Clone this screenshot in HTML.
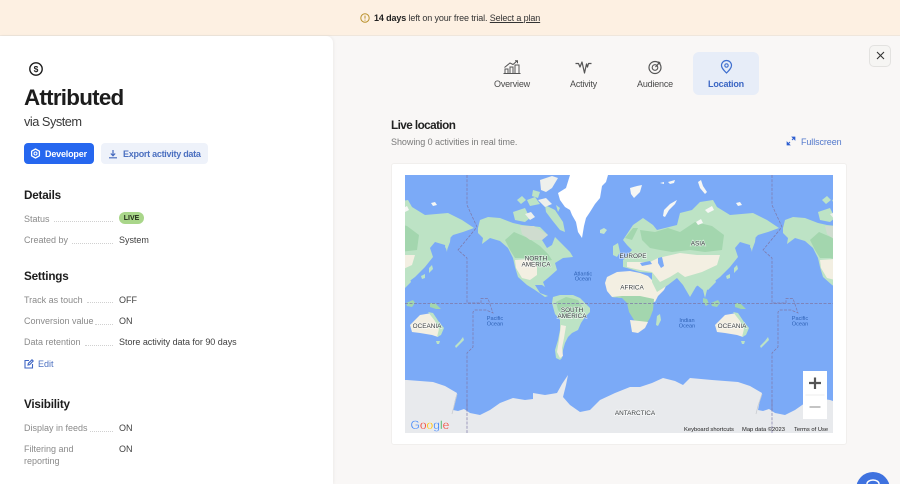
<!DOCTYPE html>
<html><head><meta charset="utf-8"><style>
html,body{margin:0;padding:0;width:900px;height:484px;overflow:hidden}
body{position:relative;background:#f9f7f6;font-family:"Liberation Sans",sans-serif;color:#3a3a3a}
.t{position:absolute;white-space:nowrap;line-height:12px;font-size:9px}
.h{font-weight:700;font-size:11.7px;color:#1c1c1c;letter-spacing:-.2px;left:24px}
.l{left:24px;color:#8a8a8a}
.v{left:119px;color:#404040;letter-spacing:-.03px}
.d{position:absolute;border-bottom:1px dotted #d0d0d0;height:0}
.tab{color:#4a4a4a;text-align:center;width:70px;letter-spacing:-.2px}
svg{position:absolute;overflow:visible}
.ml{font-size:6.4px;fill:#3c4043;text-anchor:middle;stroke:#fff;stroke-width:1.4px;paint-order:stroke;stroke-opacity:.6}
.mo{font-size:5.6px;fill:#2f62b5;text-anchor:middle}
</style></head><body>
<div style="position:absolute;left:0;top:0;width:900px;height:36px;background:#fdf0e2;border-bottom:1px solid #efe6dc;box-sizing:border-box"></div>
<svg style="left:360px;top:13px" width="10" height="10" viewBox="0 0 10 10"><circle cx="5" cy="5" r="4.2" fill="none" stroke="#b9912c" stroke-width="1"/><path d="M5 2.600v3M5 6.600v1" stroke="#b9912c" stroke-width="1"/></svg>
<div class="t" style="left:374px;top:11.500px;color:#333;letter-spacing:-.13px"><b style="color:#222">14 days</b> left on your free trial. <u>Select a plan</u></div>

<div style="position:absolute;left:0;top:36px;width:333px;height:448px;background:#fff;border-top-right-radius:7px;box-shadow:1px 0 3px rgba(0,0,0,.05)"></div>
<svg style="left:28px;top:61px" width="16" height="16" viewBox="0 0 16 16"><circle cx="8" cy="8" r="6.200" fill="none" stroke="#1c1c1c" stroke-width="1.400"/><text x="8" y="11" font-size="8.500" font-weight="700" text-anchor="middle" fill="#1c1c1c" font-family="Liberation Sans">$</text></svg>
<div class="t" style="left:24px;top:85px;font-size:22.400px;line-height:26px;font-weight:700;color:#1c1c1c;letter-spacing:-.75px">Attributed</div>
<div class="t" style="left:24px;top:114px;font-size:12.800px;line-height:16px;color:#3a3a3a;letter-spacing:-.5px">via System</div>

<div style="position:absolute;left:24px;top:143px;width:70px;height:21px;background:#2667ef;border-radius:4px"></div>
<svg style="left:30px;top:148px" width="11" height="11" viewBox="0 0 11 11"><path d="M5.500 1l3.900 2.200v4.600L5.500 10 1.600 7.800V3.200z" fill="none" stroke="#fff" stroke-width="1.300" stroke-linejoin="round"/><circle cx="5.500" cy="5.500" r="1.500" fill="none" stroke="#fff" stroke-width="1.100"/></svg>
<div class="t" style="left:45px;top:148px;color:#fff;font-weight:700;letter-spacing:-.18px">Developer</div>
<div style="position:absolute;left:101px;top:143px;width:107px;height:21px;background:#eef2fa;border-radius:4px"></div>
<svg style="left:108px;top:149px" width="10" height="10" viewBox="0 0 10 10"><path d="M5 1v5.500M2.800 4.500L5 6.800l2.200-2.300M1 8.800h8" fill="none" stroke="#4569bd" stroke-width="1.200"/></svg>
<div class="t" style="left:123px;top:148px;color:#4c70c0;font-weight:700;letter-spacing:-.27px">Export activity data</div>

<div class="t h" style="top:189.500px">Details</div>
<div class="t l" style="top:212.500px">Status</div><div class="d" style="left:54px;width:59px;top:221px"></div>
<div style="position:absolute;left:119px;top:212px;width:25px;height:12px;border-radius:6px;background:#a9d68a"></div>
<div class="t" style="left:119px;width:25px;text-align:center;top:212.500px;font-size:7px;font-weight:700;color:#1f2a17">LIVE</div>
<div class="t l" style="top:234px">Created by</div><div class="d" style="left:72px;width:41px;top:243px"></div>
<div class="t v" style="top:234px">System</div>

<div class="t h" style="top:270.500px">Settings</div>
<div class="t l" style="top:293.500px">Track as touch</div><div class="d" style="left:87px;width:26px;top:302px"></div>
<div class="t v" style="top:293.500px">OFF</div>
<div class="t l" style="top:315px">Conversion value</div><div class="d" style="left:95px;width:18px;top:324px"></div>
<div class="t v" style="top:315px">ON</div>
<div class="t l" style="top:336px">Data retention</div><div class="d" style="left:85px;width:28px;top:345px"></div>
<div class="t v" style="top:336px">Store activity data for 90 days</div>
<svg style="left:24px;top:358.500px" width="10" height="10" viewBox="0 0 10 10"><path d="M5 1.500H1v7.500h7.500V5M4 6l.4-1.700L8 .8l1.200 1.200L5.700 5.600z" fill="none" stroke="#3f66c4" stroke-width="1.100"/></svg>
<div class="t" style="left:38px;top:357.500px;color:#4c70c0">Edit</div>

<div class="t h" style="top:398.500px">Visibility</div>
<div class="t l" style="top:421.500px">Display in feeds</div><div class="d" style="left:90px;width:23px;top:431px"></div>
<div class="t v" style="top:421.500px">ON</div>
<div class="t l" style="top:443px">Filtering and</div>
<div class="t l" style="top:455px">reporting</div>
<div class="t v" style="top:443px">ON</div>

<!-- tabs -->
<div style="position:absolute;left:693px;top:52px;width:66px;height:43px;background:#e7edf8;border-radius:6px"></div>
<svg style="left:503px;top:60px" width="18" height="14" viewBox="0 0 18 14"><path d="M.5 13.500h17M2 13V9h3v4M7 13V7h3v6M12 13V5h4v8M1.500 7.500L7 3l3 1.500L14 1M12 .8h2.500v2.500" fill="none" stroke="#555" stroke-width="1"/></svg>
<div class="t tab" style="left:477px;top:78px">Overview</div>
<svg style="left:575px;top:61px" width="17" height="13" viewBox="0 0 17 13"><path d="M0.500 2.500h3l1.500 3.500L7 1l2.500 11 2-9 1 3 1-3.500h3" fill="none" stroke="#555" stroke-width="1.200" stroke-linejoin="round"/></svg>
<div class="t tab" style="left:548.500px;top:78px">Activity</div>
<svg style="left:647px;top:59px" width="16" height="16" viewBox="0 0 16 16"><circle cx="8" cy="8.500" r="6" fill="none" stroke="#555" stroke-width="1.200"/><circle cx="8" cy="8.500" r="2.800" fill="none" stroke="#555" stroke-width="1.100"/><path d="M8.500 8L13 3M11.500 2.500v2h2" fill="none" stroke="#555" stroke-width="1.200"/></svg>
<div class="t tab" style="left:620px;top:78px">Audience</div>
<svg style="left:720px;top:60px" width="13" height="14" viewBox="0 0 13 14"><path d="M6.500 13C4 10.500 1.500 8 1.500 5.500a5 5 0 0 1 10 0C11.500 8 9 10.500 6.500 13z" fill="none" stroke="#3f6fcf" stroke-width="1.200"/><circle cx="6.500" cy="5.500" r="1.700" fill="none" stroke="#3f6fcf" stroke-width="1.100"/></svg>
<div class="t tab" style="left:691px;top:78px;color:#3b66c4;font-weight:700">Location</div>

<div style="position:absolute;left:869px;top:45px;width:22px;height:22px;box-sizing:border-box;border:1px solid #e3e2e0;border-radius:5px;background:#f6f5f3"></div>
<svg style="left:876px;top:51px" width="9" height="9" viewBox="0 0 9 9"><path d="M1 1l7 7M8 1L1 8" stroke="#333" stroke-width="1.100"/></svg>

<div class="t" style="left:391px;top:119px;font-size:11.700px;line-height:14px;font-weight:700;color:#222;letter-spacing:-.55px">Live location</div>
<div class="t" style="left:391px;top:135.500px;color:#7a7a7a;letter-spacing:-.05px">Showing 0 activities in real time.</div>
<svg style="left:786px;top:136px" width="10" height="10" viewBox="0 0 10 10"><path d="M6 1h3v3L6 1zM4 9H1V6l3 3z" fill="#2f5fd0" stroke="#2f5fd0" stroke-width=".7"/><path d="M8 2L6 4M2 8l2-2" stroke="#2f5fd0" stroke-width="1"/></svg>
<div class="t" style="left:801px;top:135.500px;color:#5379cc;letter-spacing:-.1px">Fullscreen</div>

<!-- card -->
<div style="position:absolute;left:391px;top:163px;width:456px;height:282px;background:#fff;border:1px solid #f1efed;box-sizing:border-box;border-radius:3px"></div>
<svg style="left:405px;top:175px;overflow:hidden" width="428" height="258" viewBox="405 175 428 258">
<defs><g id="w">
<!-- North America -->
<path fill="#bde3c5" d="M478 228L480 220 488 217 500 218 513 223 522 225 540 227 548 235 542 240 547 248 552 245 555 237 563 245 570 252 573 257 563 258 555 263 557 270 548 278 543 282 545 287 542 285 535 285 540 293 548 296 545 297 535 290 527 285 518 277 515 267 513 258 508 248 500 241 490 238 482 244 483 238 478 233Z"/>
<path fill="#a3d6ae" d="M505 240L514 232 528 238 540 246 548 254 552 260 540 262 525 258 515 258 510 250Z"/>
<path fill="#cfdccf" d="M520 226L534 226 548 235 542 240 530 240 522 234Z"/>
<path fill="#f3efe2" d="M515 260L530 259 537 265 537 275 530 280 522 278 516 268Z"/>
<!-- arctic -->
<path fill="#bde3c5" d="M513 212L525 208 530 218 525 222 515 220ZM545 205L555 210 563 222 565 232 560 230 552 220 546 212ZM527 200L535 197 540 204 530 206ZM517 200L522 196 526 200 521 204Z"/>
<path fill="#eef0ec" d="M540 180L552 176 558 178 552 188 546 192 541 190ZM525 214L531 212 535 217 530 220ZM538 200L546 198 552 204 545 207Z"/>
<path fill="#bde3c5" d="M533 190L540 192 538 198 532 196ZM556 205L560 208 558 212Z"/>
<!-- Greenland -->
<path fill="#fff" d="M558 193L566 188 570 175 608 175 606 182 602 186 600 198 595 204 590 212 586 218 584 226 582 238 578 232 576 222 572 215 570 210 565 207 560 200Z"/>
<path fill="#c5e6cd" d="M600 230L604 228 607 230 604 234 600 233Z"/>
<!-- South America -->
<path fill="#bde3c5" d="M552 303L553 297 560 295 573 295 580 298 590 308 590 312 585 317 581 323 578 330 572 333 568 337 565 343 563 350 562 358 560 360 556 358 555 350 558 340 560 330 560 320 555 314Z"/>
<path fill="#a3d6ae" d="M556 302L566 297 578 300 584 310 575 318 565 318 558 310Z"/>
<path fill="#f3efe2" d="M561 325L566 326 564 338 562 348 563 356 560 358 557 352 559 340Z"/>
<!-- Africa -->
<path fill="#f3efe2" d="M605 283L607 277 617 272 630 271 640 273 648 276 653 281 658 284 668 282 664 290 658 296 655 302 640 298 622 298 612 297 607 291Z"/>
<path fill="#a3d6ae" d="M612 297L622 296 640 296 654 299 653 310 650 318 645 326 634 320 629 312 627 303 622 298Z"/>
<path fill="#f3efe2" d="M630 320L648 322 645 328 638 333 632 332Z"/>
<path fill="#bde3c5" d="M657 316L660 314 661 320 658 326 656 325Z"/>
<!-- Eurasia -->
<path fill="#bde3c5" d="M623 267L623 260 632 250 627 245 623 240 633 225 643 218 653 225 657 230 677 225 680 213 692 210 700 202 713 200 717 207 730 215 753 213 767 220 779 228 768 232 758 235 753 240 752 252 750 245 740 242 735 248 738 257 730 267 727 270 720 277 712 283 707 290 705 298 703 290 697 285 690 297 683 285 677 278 668 285 657 292 652 282 652 273 640 272 627 268Z"/>
<path fill="#a3d6ae" d="M640 230L655 232 668 228 680 232 695 222 712 226 724 235 722 250 705 252 690 250 672 252 660 250 650 248 642 240ZM625 238L633 228 638 228 632 240Z"/>
<path fill="#f3efe2" d="M658 258L680 253 697 255 720 255 717 265 702 272 685 277 678 272 670 277 660 282 652 272 640 270 627 267 627 262 650 262Z"/>
<path fill="#bde3c5" d="M690 278L700 276 712 272 716 282 708 290 700 284 694 288Z"/>
<path fill="#7baaf7" d="M658 258L662 257 664 266 661 268 658 263ZM640 263L650 261 652 264 642 266Z"/>
<path fill="#bde3c5" d="M613 246L618 243 620 252 617 257 613 255Z"/>
<path fill="#f6f7f5" d="M630 188L637 186 642 185 640 192 634 198 631 194ZM698 182L701 180 703 186 707 192 705 194 700 188ZM664 210L670 204 677 200 675 204 669 210 665 217 663 216ZM660 183L664 182 664 184ZM668 182L675 180 674 183 670 184ZM736 203L740 202 742 205 738 206ZM705 210L712 206 714 210 708 213ZM696 222L701 219 703 223 698 225Z"/>
<path fill="#bde3c5" d="M752 238L756 234 755 242 752 250 750 247Z"/>
<path fill="#bde3c5" d="M734 268L737 265 738 269 734 273ZM726 276L730 274 730 278 727 279Z"/>
<!-- Indonesia -->
<path fill="#a3d6ae" d="M703 298L707 299 709 304 706 306 703 302ZM711 303L718 300 720 303 717 307 712 306ZM735 303L740 303 746 309 741 309 735 307Z"/>
<!-- Oceania -->
<path fill="#f3efe2" d="M715 325L725 315 737 313 743 322 748 328 743 337 737 335 725 333 717 332Z"/>
<path fill="#bde3c5" d="M733 312L738 313 744 322 749 328 746 335 742 337 744 329 740 321Z"/>
<path fill="#bde3c5" d="M741 341L745 341 744 344 742 344ZM760 346L765 341 768 337 769 340 765 344 761 348Z"/>
<!-- date line -->
<path fill="none" stroke="#7f78a8" stroke-width=".7" stroke-dasharray="3 1.300" d="M467 175V205L477 227 458 250 467 258V303H481V298.500H488L493 313 486 310H475L473 312V347L467 353V433"/>
</g></defs>
<rect x="405" y="175" width="428" height="258" fill="#7baaf7"/>
<use href="#w" x="-305"/><use href="#w"/><use href="#w" x="305"/>
<!-- Antarctica -->
<path fill="#e8eaed" d="M405 380L407 380 420 381 433 382 445 386 457 393 455 400 453 410 458 411 464 409 470 413 480 415 490 410 500 403 513 398 525 400 533 399 533 393 545 395 557 393 562 384 568 375 566 385 563 397 570 405 580 412 590 410 600 400 615 393 630 387 640 387 652 383 663 378 675 381 683 385 690 378 712 380 725 381 738 382 750 386 762 393 760 400 758 410 763 411 769 409 775 413 785 415 795 410 805 403 818 398 830 400 833 401V433H405Z"/>
<path fill="none" stroke="#c9cdd1" stroke-width=".8" d="M457 394L454 406 452 414M762 394L758 406 756 414"/>
<path fill="none" stroke="#7f78a8" stroke-width=".7" stroke-dasharray="3 1.300" d="M467 400V433M772 400V433"/>
<path fill="none" stroke="#7f78a8" stroke-width=".7" stroke-dasharray="3 1.500" d="M405 303.500H833"/>
<g font-family="Liberation Sans">
<text class="ml" x="536" y="260.500">NORTH</text><text class="ml" x="536" y="266.500">AMERICA</text>
<text class="ml" x="633" y="258">EUROPE</text>
<text class="ml" x="632" y="289.500">AFRICA</text>
<text class="ml" x="698" y="245.500">ASIA</text>
<text class="ml" x="572" y="312">SOUTH</text><text class="ml" x="572" y="318">AMERICA</text>
<text class="ml" x="427" y="328">OCEANIA</text><text class="ml" x="732" y="328">OCEANIA</text>
<text class="ml" x="635" y="415">ANTARCTICA</text>
<text class="mo" x="583" y="275.500">Atlantic</text><text class="mo" x="583" y="280.500">Ocean</text>
<text class="mo" x="495" y="320">Pacific</text><text class="mo" x="495" y="325.500">Ocean</text>
<text class="mo" x="800" y="320">Pacific</text><text class="mo" x="800" y="325.500">Ocean</text>
<text class="mo" x="687" y="322">Indian</text><text class="mo" x="687" y="327.500">Ocean</text>
<text x="410.500" y="429" font-size="12" font-weight="400" stroke="#fff" stroke-width=".15"><tspan fill="#4285f4">G</tspan><tspan fill="#ea4335">o</tspan><tspan fill="#fbbc05">o</tspan><tspan fill="#4285f4">g</tspan><tspan fill="#34a853">l</tspan><tspan fill="#ea4335">e</tspan></text>
<text x="684" y="431" font-size="5.800" fill="#222">Keyboard shortcuts</text>
<text x="742" y="431" font-size="5.800" fill="#222">Map data ©2023</text>
<text x="794" y="431" font-size="5.800" fill="#222">Terms of Use</text>
</g>
<rect x="803" y="371" width="24" height="48" fill="#fff"/>
<path d="M809 383h12M815 377.500v11.500" stroke="#555" stroke-width="2.200"/>
<path d="M805.500 395h19" stroke="#e6e6e6" stroke-width=".7"/>
<path d="M809.500 407h11" stroke="#c4c4c4" stroke-width="2"/>
</svg>

<div style="position:absolute;left:855.500px;top:472px;width:34px;height:34px;border-radius:50%;background:#3f72df"></div>
<svg style="left:866px;top:481px" width="14" height="3" viewBox="0 0 14 3"><path d="M1 3a6 4 0 0 1 12 0" fill="none" stroke="#fff" stroke-width="1.500"/></svg>
</body></html>
